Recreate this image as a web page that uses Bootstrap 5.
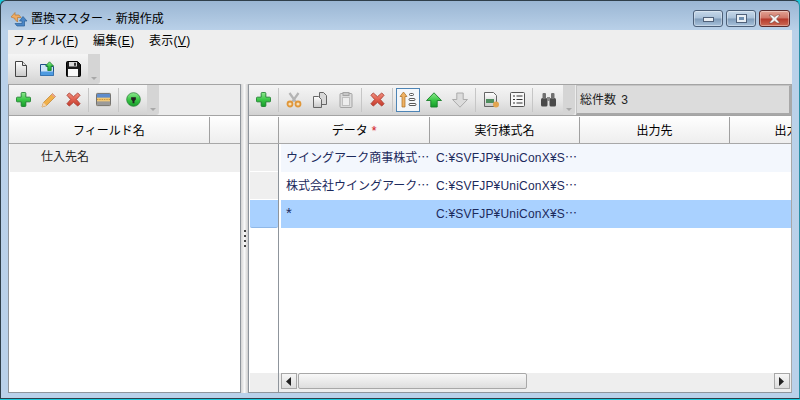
<!DOCTYPE html>
<html lang="ja">
<head>
<meta charset="UTF-8">
<title>置換マスター - 新規作成</title>
<link href="https://cdn.jsdelivr.net/npm/bootstrap@5.3.3/dist/css/bootstrap.min.css" rel="stylesheet">
<style>
html, body { width: 800px; height: 400px; overflow: hidden; margin: 0; }
body { font-family: "Liberation Sans", "Noto Sans CJK JP", sans-serif; font-size: 12px; color: #000; background: #19c9dc; }
.win-frame { width: 800px; height: 399px; display: flex; flex-direction: column; padding: 0 7px 5px; border: 1px solid #2f3f4a; border-right-color: #2a8fa5; border-radius: 6px 6px 0 0; background-image: linear-gradient(180deg, #9ab6d3 0, #bad1e9 30px, #b9d1ea 100%); }
.win-title { height: 29px; flex: none; position: relative; }
.title-icon { margin: 10px 3px 0 2px; flex: none; }
.win-title-text { font-size: 12px; word-spacing: 1px; padding-top: 9px; line-height: 18px; }
.win-btns { margin: 9px 2px 0 auto; gap: 3px; align-self: flex-start; }
.win-btn { height: 17px; width: 30px; border: 1px solid #4c5f78; border-radius: 3px; background: linear-gradient(180deg, #c6d8ea 0, #a9c1d9 48%, #7f9bb9 52%, #a8c2dc 100%); box-shadow: inset 0 0 0 1px rgba(255,255,255,.35); }
.win-btn-close { width: 31px; border-color: #5a2a2a; background: linear-gradient(180deg, #e2a394 0, #cf7566 48%, #b5382a 52%, #cc6a55 100%); }
.win-body { flex: 1; min-height: 0; background: #eeeeee; display: flex; flex-direction: column; }
.menu-row { height: 24px; flex: none; padding-left: 5px; gap: 14.5px; font-size: 12px; line-height: 23px; }
.menu-row span { letter-spacing: .3px; }
.top-tools { height: 30px; flex: none; }
.tool-strip { display: flex; align-items: center; padding-bottom: 1px; background: linear-gradient(180deg, #f5f5f5 0, #e8e8e8 50%, #d2d2d2 100%); }
.strip-top { width: 80px; }
.strip-left { width: 138px; padding-left: 2px; }
.strip-right { width: 314px; padding-left: 1px; }
.tool-cap { width: 12px; align-self: stretch; background: #d5d5d5; border-radius: 0 0 3px 0; position: relative; flex: none; }
.tool-cap::after { content: ""; position: absolute; left: 3px; bottom: 4px; border: 3px solid transparent; border-top-color: #a8a8a8; border-bottom: 0; }
.tool-item { width: 26px; height: 24px; display: flex; align-items: center; justify-content: center; flex: none; }
.strip-left .tool-item { width: 25px; }
.tool-item.is-on { position: relative; }
.tool-item.is-on::before { content: ""; position: absolute; left: 1px; top: 0; width: 24px; height: 24px; border: 1px solid #4d84b5; background: #f4f7fa; }
.tool-item.is-on svg { position: relative; }
.tool-sep { width: 1px; height: 24px; background: #c6c6c6; flex: none; margin: 0 2px; }
.panes { flex: 1; min-height: 0; display: flex; }
.pane-left { width: 233px; flex: none; border: 1px solid #8f959c; border-top-color: #a4a4a4; display: flex; flex-direction: column; background: #fff; }
.split-bar { width: 7px; flex: none; background: linear-gradient(90deg, #d4d4d4, #f8f8f8 50%, #cdcdcd); display: flex; flex-direction: column; align-items: center; justify-content: center; gap: 3px; }
.split-dot { width: 2px; height: 2px; background: #444; }
.pane-right { flex: 1; min-width: 0; border: 1px solid #8f959c; border-top-color: #a4a4a4; border-right-color: #a8a8a8; display: flex; flex-direction: column; background: #fff; }
.pane-tools { height: 30px; flex: none; background: #ececec; }
.count-box { flex: 1; margin-left: 1px; border: 1px solid #c4c4c4; border-right: 2px solid #a8a8a8; border-bottom: 2px solid #a8a8a8; background: #dcdcdc; padding-left: 3px; line-height: 28px; font-size: 12px; word-spacing: 2px; color: #222; }
.head-row { height: 29px; flex: none; display: flex; background: linear-gradient(180deg, #ffffff 0, #f6f6f6 50%, #eeeeee 100%); border-bottom: 1px solid #a8a8a8; border-top: 1px solid #a4a4a4; overflow: hidden; }
.head-cell { flex: none; display: flex; align-items: center; justify-content: center; border-right: 1px solid #a0a0a0; font-size: 12px; margin-top: 1px; padding-top: 2px; white-space: nowrap; }
.req-mark { color: #d0202a; margin-left: 4px; text-shadow: 0 0 2px #f4a0a8; }
.field-row { height: 28px; background: #efefef; width: 230px; margin-left: 1px; padding-left: 31px; line-height: 27px; font-size: 12px; color: #222; }
.grid-main { flex: 1; min-height: 0; display: flex; }
.row-heads { width: 30px; flex: none; padding-left: 1px; background: #fff; border-right: 1px solid #8f959c; display: flex; flex-direction: column; }
.row-head { height: 28px; flex: none; background: #efefef; border-bottom: 1px solid #fff; }
.row-head.is-sel { background: #a9d1ff; border-bottom: 1px solid #8fb8e8; border-radius: 0 0 2px 2px; }
.row-gap { flex: 1; }
.row-foot { height: 19px; flex: none; background: #eeeeee; }
.grid-cols { flex: 1; min-width: 0; display: flex; flex-direction: column; padding-left: 2px; }
.data-row { height: 28px; flex: none; display: flex; align-items: center; padding-bottom: 2px; color: #1c2a5c; font-size: 12px; white-space: nowrap; }
.data-row.is-alt { background: #f3f7fd; }
.data-row.is-sel { background: #a9d1ff; }
.cell-a { width: 150px; padding-left: 5px; flex: none; overflow: hidden; }
.cell-b { padding-left: 5px; letter-spacing: .2px; }
.cjk-dots { font-family: "Noto Sans CJK JP", sans-serif; letter-spacing: 0; }
.star-cell { font-size: 15px; line-height: 16px; }
.scroll-row { height: 19px; flex: none; background: #eeeeee; display: flex; align-items: flex-start; padding-right: 1px; margin-top: auto; margin-left: -2px; padding-left: 2px; }
.scroll-btn { width: 16px; height: 16px; border: 1px solid #a8a8a8; background: linear-gradient(180deg, #f6f6f6, #dcdcdc); display: flex; align-items: center; justify-content: center; flex: none; }
.scroll-thumb { width: 229px; height: 16px; border: 1px solid #a8a8a8; background: linear-gradient(180deg, #f8f8f8, #dedede); border-radius: 2px; margin-left: 1px; flex: none; }
</style>
</head>
<body>
<svg width="0" height="0" class="position-absolute">
  <defs>
    <linearGradient id="gr-green" x1="0" y1="0" x2="0" y2="1"><stop offset="0" stop-color="#8fe88f"/><stop offset=".5" stop-color="#3cc848"/><stop offset="1" stop-color="#159a2a"/></linearGradient>
    <linearGradient id="gr-red" x1="0" y1="0" x2="0" y2="1"><stop offset="0" stop-color="#f0907f"/><stop offset=".5" stop-color="#e0604f"/><stop offset="1" stop-color="#c23a2c"/></linearGradient>
    <linearGradient id="gr-paper" x1="0" y1="0" x2="0" y2="1"><stop offset="0" stop-color="#ffffff"/><stop offset="1" stop-color="#c8c8c8"/></linearGradient>
    <symbol id="ic-plus" viewBox="0 0 16 16"><path d="M5.500 1.500a1 1 0 0 1 1-1h3a1 1 0 0 1 1 1v4h4a1 1 0 0 1 1 1v3a1 1 0 0 1-1 1h-4v4a1 1 0 0 1-1 1h-3a1 1 0 0 1-1-1v-4h-4a1 1 0 0 1-1-1v-3a1 1 0 0 1 1-1h4z" fill="url(#gr-green)" stroke="#187a2a" stroke-width=".9"/></symbol>
    <symbol id="ic-x" viewBox="0 0 16 16"><path d="M1 3.500 3.500 1 8 5 12.500 1 15 3.500 11 8l4 4.500-2.500 2.500L8 11l-4.500 4L1 12.500 5 8z" fill="url(#gr-red)" stroke="#a8382c" stroke-width=".9" stroke-linejoin="round"/></symbol>
    <symbol id="ic-up" viewBox="0 0 16 16"><path d="M8 .8 15.500 8.500H11.200V15H4.800V8.500H.5z" fill="url(#gr-green)" stroke="#1a7f2b" stroke-width=".9" stroke-linejoin="round"/></symbol>
    <symbol id="ic-down" viewBox="0 0 16 16"><path d="M4.800 1h6.400v6.500h4.300L8 15.200.5 7.500h4.300z" fill="#dcdcdc" stroke="#a5a5a5" stroke-width=".9" stroke-linejoin="round"/></symbol>
  </defs>
</svg>
<div class="win-frame">
  <div class="win-title d-flex">
    <svg class="title-icon" width="18" height="16" viewBox="0 0 18 16"><path d="M1 6 5 1.500V4h4l2 2.500H7.500V11L5 8.500V7.500z" fill="#efab62" stroke="#b67a38" stroke-width=".7"/><path d="M5 12.500h7V10H9.500L13 5.500 17 10h-2.500v5H7z" fill="#4a86c6" stroke="#2a5f97" stroke-width=".7"/></svg>
    <span class="win-title-text">置換マスター - 新規作成</span>
    <div class="win-btns d-flex">
      <div class="win-btn d-flex align-items-center justify-content-center"><svg width="11" height="7"><rect x=".5" y="2.500" width="10" height="4" fill="#e8eef4" stroke="#50617a"/></svg></div>
      <div class="win-btn d-flex align-items-center justify-content-center"><svg width="11" height="9"><rect x=".5" y=".5" width="10" height="8" fill="#e8eef4" stroke="#50617a"/><rect x="3" y="3" width="5" height="3" fill="#6f8fb0"/></svg></div>
      <div class="win-btn win-btn-close d-flex align-items-center justify-content-center"><svg width="13" height="10"><path d="M1 1h3l2.500 2L9 1h3L8.500 5 12 9H9L6.500 7 4 9H1l3.500-4z" fill="#f2f2f2" stroke="#6a3a32" stroke-width=".5"/></svg></div>
    </div>
  </div>
  <div class="win-body">
    <div class="menu-row d-flex">
      <span>ファイル(<u>F</u>)</span><span>編集(<u>E</u>)</span><span>表示(<u>V</u>)</span>
    </div>
    <div class="top-tools d-flex">
      <div class="tool-strip strip-top">
        <div class="tool-item"><svg width="14" height="16" viewBox="0 0 14 16"><path d="M1.500.5h7l4 4v11h-11z" fill="url(#gr-paper)" stroke="#444"/><path d="M8.500.5v4h4" fill="#e4e4e4" stroke="#444"/></svg></div>
        <div class="tool-item"><svg width="16" height="16" viewBox="0 0 16 16"><path d="M1.500 3.500h6v2h7v9h-13z" fill="#cfe4f8" stroke="#1f4f86"/><path d="M1.500 10.500h13v4h-13z" fill="#4f9be0"/><path d="M10.500.8 14.500 5h-2.300v4.500H8.800V5H6.500z" fill="url(#gr-green)" stroke="#1a7f2b" stroke-width=".8"/></svg></div>
        <div class="tool-item"><svg width="16" height="16" viewBox="0 0 16 16"><path d="M1.500 1.500a1 1 0 0 1 1-1h10l3 3v11a1 1 0 0 1-1 1h-12a1 1 0 0 1-1-1z" fill="#1c1c1c" stroke="#000"/><rect x="4" y="1" width="8" height="4.500" fill="#d8d8d8"/><rect x="9" y="1.800" width="2" height="3" fill="#333"/><rect x="3" y="8" width="10" height="7.500" fill="#fafafa"/></svg></div>
      </div>
      <div class="tool-cap"></div>
    </div>
    <div class="panes">
      <div class="pane-left">
        <div class="pane-tools d-flex">
          <div class="tool-strip strip-left">
            <div class="tool-item"><svg width="15" height="15"><use href="#ic-plus"/></svg></div>
            <div class="tool-item"><svg width="16" height="16" viewBox="0 0 16 16"><path d="M1 15l1.500-4.500L11.500 1.500l3 3-9 9z" fill="#f0b04a" stroke="#c28a3c" stroke-width=".8"/><path d="M1 15l1.500-4.500 3 3z" fill="#f1d3b0"/><path d="M10.500 2.500l1-1 3 3-1 1z" fill="#e8a098"/></svg></div>
            <div class="tool-item"><svg width="15" height="15"><use href="#ic-x"/></svg></div>
            <div class="tool-sep"></div>
            <div class="tool-item"><svg width="15" height="15" viewBox="0 0 16 16"><rect x=".5" y="1.500" width="15" height="13" rx="1" fill="#f0c878" stroke="#666"/><rect x="1" y="2" width="14" height="4" fill="#5f8ccc"/><rect x="1" y="10" width="14" height="4" fill="#9a9a9a"/><path d="M1 8h14" stroke="#c98f3a" stroke-dasharray="1.500 1"/></svg></div>
            <div class="tool-sep"></div>
            <div class="tool-item"><svg width="15" height="15" viewBox="0 0 16 16"><circle cx="8" cy="8" r="7.300" fill="url(#gr-green)" stroke="#2a7f38" stroke-width=".8"/><path d="M5.500 5.500h5V8L9 9.500V12H7V9.500L5.500 8z" fill="#222"/></svg></div>
          </div>
          <div class="tool-cap"></div>
        </div>
        <div class="head-row">
          <div class="head-cell" style="width:201px">フィールド名</div>
        </div>
        <div class="field-row">仕入先名</div>
      </div>
      <div class="split-bar">
        <div class="split-dot"></div><div class="split-dot"></div><div class="split-dot"></div><div class="split-dot"></div>
      </div>
      <div class="pane-right">
        <div class="pane-tools d-flex">
          <div class="tool-strip strip-right">
            <div class="tool-item"><svg width="15" height="15"><use href="#ic-plus"/></svg></div>
            <div class="tool-sep"></div>
            <div class="tool-item"><svg width="16" height="16" viewBox="0 0 16 16"><path d="M3.500 1 9.500 9.500M12.500 1 6.500 9.500" fill="none" stroke="#b4b4b4" stroke-width="2.200"/><circle cx="4" cy="12" r="2.500" fill="#f7e0b8" stroke="#e0973a" stroke-width="1.800"/><circle cx="12" cy="12" r="2.500" fill="#f7e0b8" stroke="#e0973a" stroke-width="1.800"/></svg></div>
            <div class="tool-item"><svg width="16" height="16" viewBox="0 0 16 16"><path d="M7.500.5h4l3 3v9h-7z" fill="#d8d8d8" stroke="#666"/><path d="M1.500 4.500h5l3 3v8h-8z" fill="url(#gr-paper)" stroke="#666"/></svg></div>
            <div class="tool-item"><svg width="14" height="16" viewBox="0 0 14 16"><rect x="1" y="1.500" width="12" height="14" rx="1" fill="#dcdcdc" stroke="#a4a4a4"/><rect x="4" y=".5" width="6" height="3" fill="#c8c8c8" stroke="#a4a4a4"/><rect x="3.500" y="5.500" width="7" height="8" fill="#eeeeee" stroke="#c0c0c0"/></svg></div>
            <div class="tool-sep"></div>
            <div class="tool-item"><svg width="15" height="15"><use href="#ic-x"/></svg></div>
            <div class="tool-sep"></div>
            <div class="tool-item is-on"><svg width="18" height="17" viewBox="0 0 18 17"><path d="M4.500 1 8 5.500H6V16H3V5.500H1z" fill="#f0b264" stroke="#a66d24" stroke-width=".7"/><g fill="#fff" stroke="#444" stroke-width=".9"><rect x="10.500" y="2.500" width="4" height="2" rx="1"/><rect x="10" y="7.500" width="6" height="2" rx="1"/><rect x="10" y="12.500" width="7" height="2" rx="1"/></g></svg></div>
            <div class="tool-item"><svg width="16" height="16"><use href="#ic-up"/></svg></div>
            <div class="tool-item"><svg width="16" height="16"><use href="#ic-down"/></svg></div>
            <div class="tool-sep"></div>
            <div class="tool-item"><svg width="17" height="16" viewBox="0 0 17 16"><path d="M1.500.5h9l3 3v11h-12z" fill="url(#gr-paper)" stroke="#666"/><rect x="3" y="7" width="8" height="4" fill="#4f8f5f"/><circle cx="13" cy="12.500" r="3" fill="#e3a550"/></svg></div>
            <div class="tool-item"><svg width="15" height="15" viewBox="0 0 15 15"><rect x=".5" y=".5" width="14" height="14" rx="1" fill="#f8f8f8" stroke="#555"/><path d="M3 4h2M3 7.500h2M3 11h2M6.500 4h6M6.500 7.500h6M6.500 11h6" stroke="#333"/></svg></div>
            <div class="tool-sep"></div>
            <div class="tool-item"><svg width="17" height="15" viewBox="0 0 17 15"><rect x="1" y="6" width="6.500" height="8.500" rx="1.500" fill="#4a4a4a"/><rect x="9.500" y="6" width="6.500" height="8.500" rx="1.500" fill="#4a4a4a"/><rect x="2.500" y="1" width="3.500" height="6" rx="1" fill="#707070"/><rect x="11" y="1" width="3.500" height="6" rx="1" fill="#707070"/><rect x="7" y="5" width="3" height="4" fill="#8a8a8a"/></svg></div>
          </div>
          <div class="tool-cap"></div>
          <div class="count-box">総件数 3</div>
        </div>
        <div class="head-row">
          <div class="head-cell" style="width:30px"></div>
          <div class="head-cell" style="width:151px">データ<span class="req-mark">*</span></div>
          <div class="head-cell" style="width:150px">実行様式名</div>
          <div class="head-cell" style="width:150px">出力先</div>
          <div class="head-cell" style="width:150px">出力モード</div>
        </div>
        <div class="grid-main">
          <div class="row-heads">
            <div class="row-head"></div>
            <div class="row-head"></div>
            <div class="row-head is-sel"></div>
            <div class="row-gap"></div>
            <div class="row-foot"></div>
          </div>
          <div class="grid-cols">
            <div class="data-row is-alt"><div class="cell-a">ウイングアーク商事株式<span class="cjk-dots">…</span></div><div class="cell-b">C:¥SVFJP¥UniConX¥S<span class="cjk-dots">…</span></div></div>
            <div class="data-row"><div class="cell-a">株式会社ウイングアーク<span class="cjk-dots">…</span></div><div class="cell-b">C:¥SVFJP¥UniConX¥S<span class="cjk-dots">…</span></div></div>
            <div class="data-row is-sel"><div class="cell-a star-cell">*</div><div class="cell-b">C:¥SVFJP¥UniConX¥S<span class="cjk-dots">…</span></div></div>
            <div class="scroll-row">
              <div class="scroll-btn"><svg width="6" height="9"><path d="M5 0v9L0 4.500z" fill="#222"/></svg></div>
              <div class="scroll-thumb"></div>
              <div class="scroll-btn ms-auto"><svg width="6" height="9"><path d="M0 0v9l5-4.500z" fill="#222"/></svg></div>
            </div>
          </div>
        </div>
      </div>
    </div>
  </div>
</div>
</body>
</html>
